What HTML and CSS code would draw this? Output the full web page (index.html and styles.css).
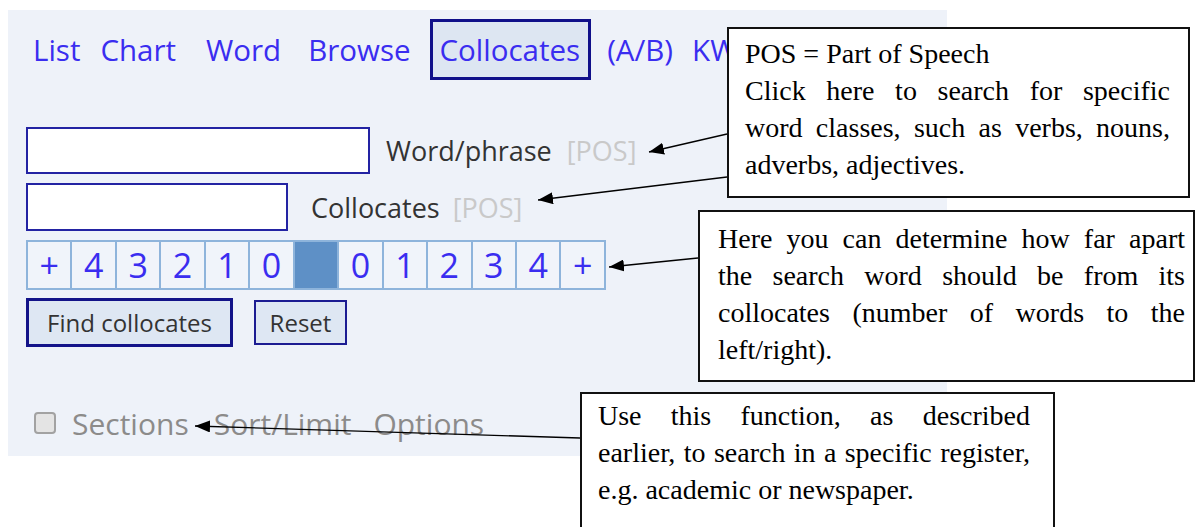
FILE: index.html
```html
<!DOCTYPE html>
<html>
  <head>
    <title>Collocates search</title>
    <link rel="stylesheet" href="styles.css">
  </head>
  <body>

    <div class="panel">
      <nav class="tabs">
        <a class="tab gap-list">List</a>
        <a class="tab gap-chart">Chart</a>
        <a class="tab gap-word">Word</a>
        <a class="tab gap-browse">Browse</a>
        <a class="tab tab-on">Collocates</a>
        <a class="tab gap-ab">(A/B)</a>
        <a class="tab">KWIC</a>
      </nav>

      <div class="field">
        <input class="box box-word" type="text">
        <span class="label label-word">Word/phrase</span>
        <span class="pos pos-word">[POS]</span>
      </div>

      <div class="field field-next">
        <input class="box box-coll" type="text">
        <span class="label label-coll">Collocates</span>
        <span class="pos pos-coll">[POS]</span>
      </div>

      <table class="span">
        <tr>
          <td>+</td><td>4</td><td>3</td><td>2</td><td>1</td><td>0</td>
          <td class="node"></td>
          <td>0</td><td>1</td><td>2</td><td>3</td><td>4</td><td>+</td>
        </tr>
      </table>

      <div class="actions">
        <button class="btn btn-find">Find collocates</button>
        <button class="btn btn-reset">Reset</button>
      </div>

      <div class="more">
        <input class="check" type="checkbox">
        <span class="more-link gap-sections">Sections</span>
        <span class="more-link gap-sort">Sort/Limit</span>
        <span class="more-link">Options</span>
      </div>
    </div>

    <!-- annotation boxes laid over the screenshot -->
    <div class="note note-pos">
      <span class="ln end">POS = Part of Speech</span>
      <span class="ln">Click here to search for specific</span>
      <span class="ln">word classes, such as verbs, nouns,</span>
      <span class="ln end">adverbs, adjectives.</span>
    </div>

    <div class="note note-span">
      <span class="ln">Here you can determine how far apart</span>
      <span class="ln">the search word should be from its</span>
      <span class="ln">collocates (number of words to the</span>
      <span class="ln end">left/right).</span>
    </div>

    <div class="note note-sections">
      <span class="ln">Use this function, as described</span>
      <span class="ln">earlier, to search in a specific register,</span>
      <span class="ln end">e.g. academic or newspaper.</span>
    </div>

    <svg class="arrows" width="1195" height="527" viewBox="0 0 1195 527">
      <defs>
        <marker id="head" markerUnits="userSpaceOnUse" markerWidth="16" markerHeight="12"
                refX="15" refY="6" orient="auto">
          <path d="M0 0 L15 6 L0 12 Z" fill="#000"/>
        </marker>
      </defs>
      <line x1="727" y1="134" x2="649" y2="152" marker-end="url(#head)"/>
      <line x1="727" y1="177" x2="538" y2="200" marker-end="url(#head)"/>
      <line x1="698" y1="258" x2="609" y2="267" marker-end="url(#head)"/>
      <line x1="580" y1="438" x2="195" y2="426" marker-end="url(#head)"/>
    </svg>

  </body>
</html>
```

FILE: styles.css
```css
*,
*:before,
*:after {
  box-sizing: border-box;
}

html,
body {
  margin: 0px;
  padding: 0px;
  width: 1195px;
  height: 527px;
  overflow: hidden;
  background: #fff;
  font-family: "Open Sans", "Noto Sans", sans-serif;
}

body {
  position: relative;
}

.panel {
  width: 939px;
  height: 446px;
  margin: 10px 0 0 8px;
  padding: 9px 0 0 18px;
  background: #eef2f9;
}

/* top tabs */
.tabs {
  display: flex;
  align-items: center;
  height: 61px;
  margin-left: 7px;
}

.tab {
  font-size: 29.5px;
  color: #3a2df0;
  white-space: nowrap;
}

.gap-list { margin-right: 20px; }
.gap-chart { margin-right: 30px; }
.gap-word { margin-right: 27px; }
.gap-browse { margin-right: 19px; }
.gap-ab { margin-right: 19px; }

.tab-on {
  display: flex;
  align-items: center;
  height: 61px;
  margin-right: 16px;
  padding: 0 8px 0 7px;
  border: 3px solid #10108a;
  background: #dde6f2;
}

/* search fields */
.field {
  display: flex;
  align-items: center;
  margin-top: 47px;
}

.field-next {
  margin-top: 9px;
}

.box {
  margin: 0px;
  border: 2px solid #2323a3;
  background: #fff;
}

.box-word {
  width: 344px;
  height: 47px;
}

.box-coll {
  width: 262px;
  height: 48px;
}

.label {
  font-size: 27px;
  color: #333;
}

.label-word { margin-left: 16px; }
.label-coll { margin-left: 23px; }

.pos {
  font-size: 27px;
  color: #c9c9c9;
}

.pos-word { margin-left: 15px; }
.pos-coll { margin-left: 13px; }

/* window span */
.span {
  margin-top: 9px;
  width: 580px;
  border-collapse: collapse;
  table-layout: fixed;
}

.span td {
  height: 48px;
  padding: 0px;
  border: 2px solid #8eb4db;
  background: #f0f4fa;
  font-size: 34px;
  color: #3a2df0;
  text-align: center;
  line-height: 44px;
}

.span td.node {
  background: #5e90c6;
}

/* buttons */
.actions {
  display: flex;
  align-items: center;
  margin-top: 8px;
}

.btn {
  margin: 0px;
  padding: 0px;
  background: #dee7f3;
  font-family: "Open Sans", "Noto Sans", sans-serif;
  font-size: 24px;
  color: #333;
}

.btn-find {
  width: 207px;
  height: 49px;
  border: 3px solid #131389;
}

.btn-reset {
  width: 93px;
  height: 45px;
  margin-left: 21px;
  border: 2px solid #1c1c92;
}

/* bottom links */
.more {
  display: flex;
  align-items: center;
  height: 40px;
  margin-top: 56px;
}

.check {
  appearance: none;
  width: 22px;
  height: 22px;
  margin: 0 16px 0 8px;
  border: 2px solid #a2a2a2;
  border-radius: 4px;
  background: #e4e4e4;
}

.more-link {
  font-size: 30px;
  color: #8c8b8a;
}

.gap-sections { margin-right: 25px; }
.gap-sort { margin-right: 22px; }

/* annotations */
.note {
  position: absolute;
  border: 2px solid #111;
  background: #fff;
  font-family: "Liberation Serif", "Times New Roman", serif;
  font-size: 28px;
  line-height: 37px;
  color: #000;
}

.ln {
  display: block;
  text-align: justify;
  text-align-last: justify;
  white-space: nowrap;
}

.ln.end {
  text-align-last: left;
}

.note-pos {
  left: 727px;
  top: 27px;
  width: 463px;
  height: 171px;
  padding: 6px 18px 0 16px;
}

.note-span {
  left: 698px;
  top: 210px;
  width: 497px;
  height: 172px;
  padding: 8px 8px 0 18px;
}

.note-sections {
  left: 580px;
  top: 392px;
  width: 475px;
  height: 150px;
  padding: 3px 23px 0 16px;
}

.arrows {
  position: absolute;
  left: 0px;
  top: 0px;
  pointer-events: none;
}

.arrows line {
  stroke: #000;
  stroke-width: 1.3;
}
```
